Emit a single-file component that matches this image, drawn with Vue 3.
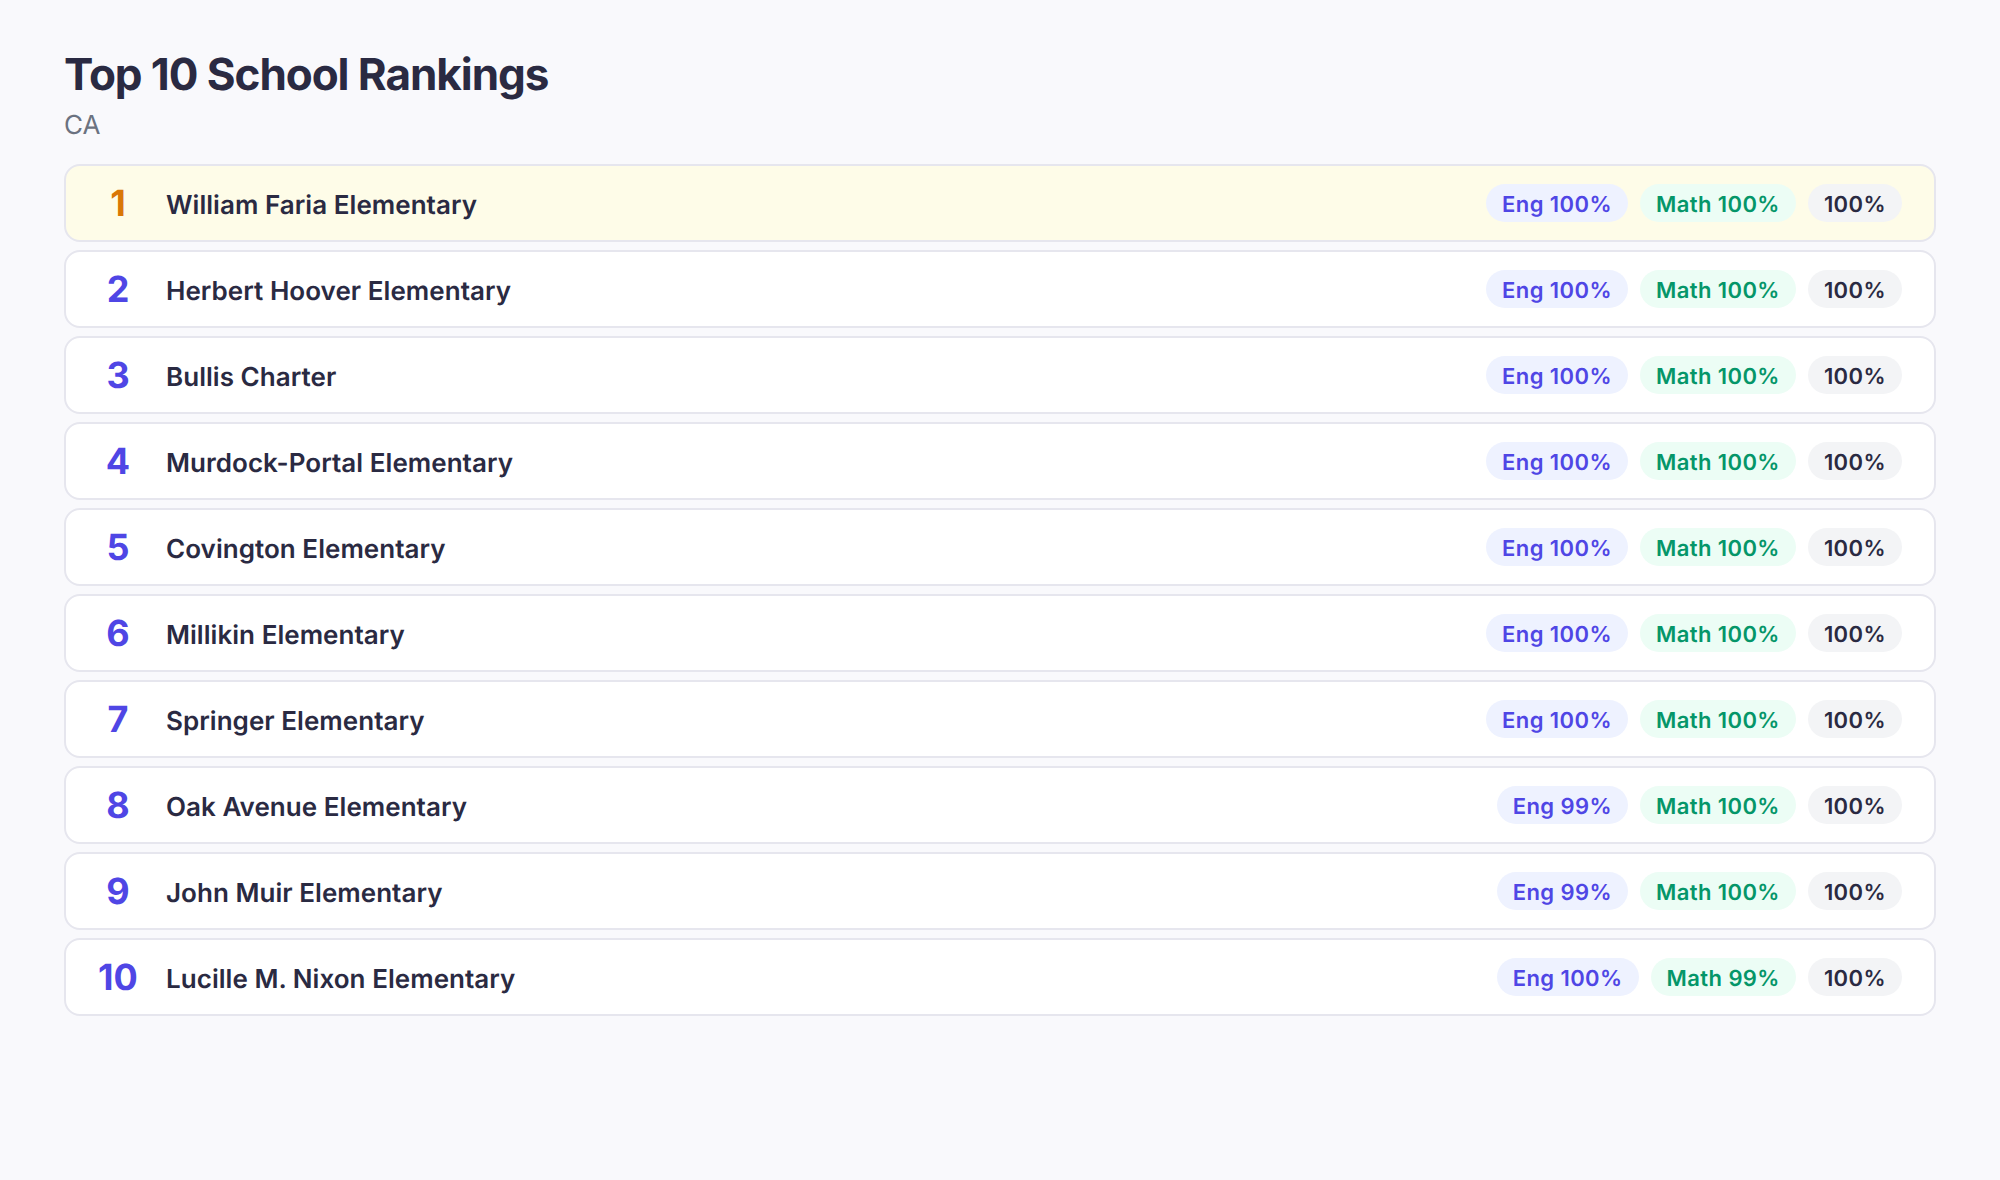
<script setup>
const rows = [
  { rank: 1, name: 'William Faria Elementary', eng: 100, math: 100 },
  { rank: 2, name: 'Herbert Hoover Elementary', eng: 100, math: 100 },
  { rank: 3, name: 'Bullis Charter', eng: 100, math: 100 },
  { rank: 4, name: 'Murdock-Portal Elementary', eng: 100, math: 100 },
  { rank: 5, name: 'Covington Elementary', eng: 100, math: 100 },
  { rank: 6, name: 'Millikin Elementary', eng: 100, math: 100 },
  { rank: 7, name: 'Springer Elementary', eng: 100, math: 100 },
  { rank: 8, name: 'Oak Avenue Elementary', eng: 99, math: 100 },
  { rank: 9, name: 'John Muir Elementary', eng: 99, math: 100 },
  { rank: 10, name: 'Lucille M. Nixon Elementary', eng: 100, math: 99 },
]
</script>

<template>
  <main class="page">
    <h1 class="title">Top 10 School Rankings</h1>
    <p class="sub">CA</p>
    <ol class="list">
      <li v-for="r in rows" :key="r.rank" class="row" :class="{ first: r.rank === 1 }">
        <span class="rank">{{ r.rank }}</span>
        <span class="name">{{ r.name }}</span>
        <span class="pills">
          <span class="pill eng">Eng {{ r.eng }}%</span>
          <span class="pill math">Math {{ r.math }}%</span>
          <span class="pill all">100%</span>
        </span>
      </li>
    </ol>
  </main>
</template>

<style>
html, body { margin: 0; background: #f9f9fc; }
</style>

<style scoped>
.page {
  box-sizing: border-box;
  height: 1180px;
  padding: 48px 64px;
  background: #f9f9fc;
  font-family: Inter, "Noto Sans", sans-serif;
  color: #2a2a42;
  text-rendering: geometricPrecision;
}
.title {
  margin: 0;
  font-size: 44px;
  line-height: 53px;
  font-weight: 700;
  letter-spacing: -1.05px;
  color: #2a2a42;
}
.sub {
  margin: 9px 0 0;
  font-size: 26px;
  line-height: 32px;
  color: #6b7280;
}
.list {
  list-style: none;
  margin: 22px 0 0;
  padding: 0;
  display: flex;
  flex-direction: column;
  gap: 8px;
}
.row {
  box-sizing: border-box;
  height: 78px;
  display: flex;
  align-items: center;
  gap: 28px;
  padding: 0 32px;
  background: #fff;
  border: 2px solid #e6e6ee;
  border-radius: 16px;
}
.row.first { background: #fefce8; }
.rank {
  width: 40px;
  text-align: center;
  font-size: 36px;
  font-weight: 700;
  color: #4f46e5;
}
.first .rank { color: #d97706; }
.name {
  flex: 1;
  padding-top: 4px;
  font-size: 26px;
  font-weight: 600;
  letter-spacing: 0.04px;
}
.pills {
  display: flex;
  gap: 12px;
}
.pill {
  box-sizing: border-box;
  height: 38px;
  display: flex;
  align-items: center;
  padding: 3px 16px 0;
  border-radius: 19px;
  font-size: 22px;
  font-weight: 600;
  letter-spacing: 0.42px;
}
.eng { background: #eef2ff; color: #4f46e5; }
.math { background: #ecfdf5; color: #059669; }
.all { background: #f3f4f6; color: #2a2a42; }
</style>
